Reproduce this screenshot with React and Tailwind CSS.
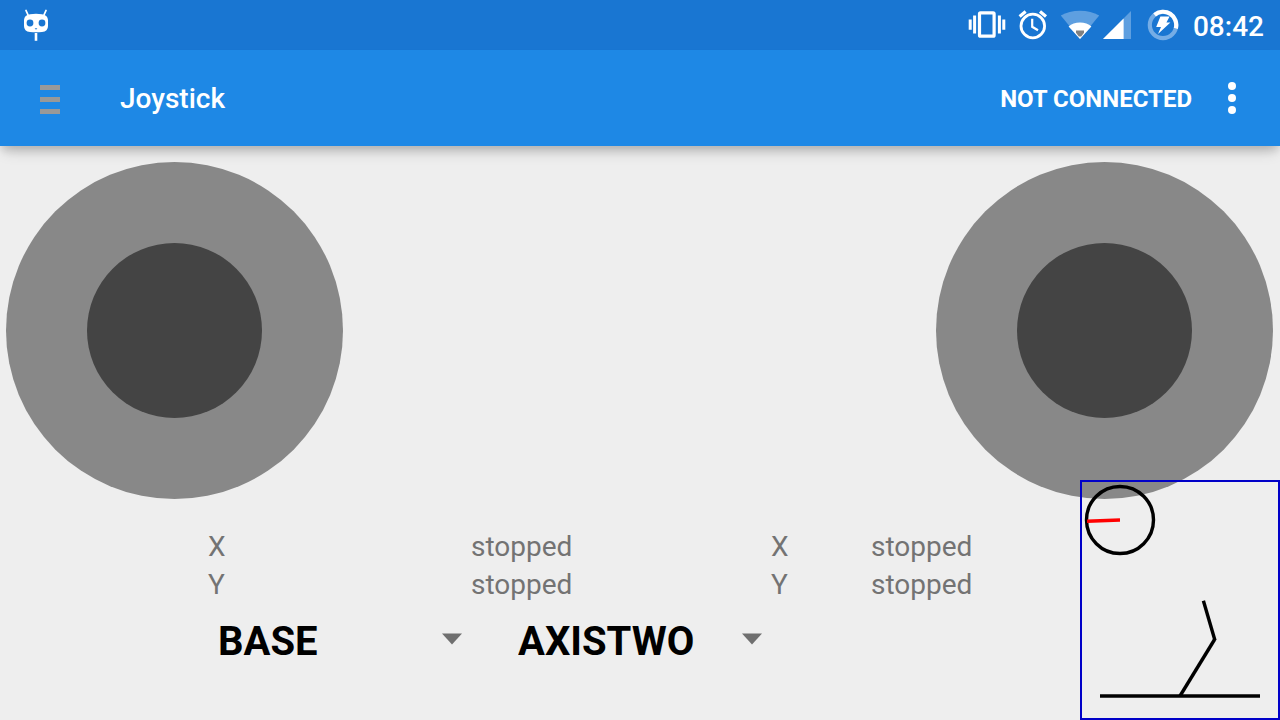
import { useState } from "react";

function NotificationIcon() {
  return (
    <svg viewBox="0 0 28 34" className="h-[34px] w-7" aria-hidden="true">
      <path d="M4 2.5 6.5 8M24 2.5 21.5 8" stroke="#fff" strokeWidth="1.8" strokeLinecap="round" />
      <path d="M8 6.2Q14 5.2 20 6.2Q25.6 7 26 12V18Q26 23.6 20 24Q14 24.6 8 24Q2 23.6 2 18V12Q2.4 7 8 6.2Z" fill="#fff" />
      <circle cx="8" cy="15" r="3.4" fill="#1976d2" />
      <circle cx="20" cy="15" r="3.4" fill="#1976d2" />
      <path d="M12.6 20.2h2.8L14 21.8Z" fill="#1976d2" />
      <path d="M14 25v7.8" stroke="#fff" strokeWidth="2.6" />
    </svg>
  );
}

function VibrateIcon() {
  return (
    <svg viewBox="0 0 38 34" className="h-[34px] w-[38px]" aria-hidden="true">
      <rect x="11.5" y="4.8" width="14.6" height="23.4" rx="1" fill="none" stroke="#fff" strokeWidth="3.2" />
      <path d="M6.6 7.5v18M31.4 7.5v18" stroke="#fff" strokeWidth="3" />
      <path d="M2.2 11.5v10.2M35.8 11.5v10.2" stroke="#fff" strokeWidth="3" />
    </svg>
  );
}

function AlarmIcon() {
  return (
    <svg viewBox="0 0 30 34" className="h-[34px] w-[30px]" aria-hidden="true">
      <g fill="none" stroke="#fff">
        <circle cx="14.8" cy="18" r="11.8" strokeWidth="2.8" />
        <path d="M1.6 8.4 7.6 3.4M22 3.4 28 8.4" strokeWidth="3.2" />
        <path d="M14.2 10.8V18.8L20 22.2" strokeWidth="2.2" />
      </g>
    </svg>
  );
}

function WifiIcon() {
  return (
    <svg viewBox="0 0 40 34" className="h-[34px] w-10" aria-hidden="true">
      <path d="M20 31 .8 7.6Q9 2.8 20 2.8T39.2 7.6Z" fill="#5e9fe0" />
      <path d="M20 31 8.6 18.6Q13 14.4 20 14.4T31.4 18.6Z" fill="#fff" />
      <path d="M16 22.4h8v2.4L21.2 28.4h-2.4L16 24.8Z" fill="#808080" />
    </svg>
  );
}

function SignalIcon() {
  return (
    <svg viewBox="0 0 30 34" className="h-[34px] w-[30px]" aria-hidden="true">
      <path d="M29 3v28H1Z" fill="#5e9fe0" />
      <path d="M21.6 10.4V31H1Z" fill="#fff" />
    </svg>
  );
}

function BatteryIcon() {
  return (
    <svg viewBox="0 0 32 34" className="h-[34px] w-8" aria-hidden="true">
      <circle cx="16" cy="17" r="13.2" fill="none" stroke="#75ade6" strokeWidth="4.2" />
      <path d="M7.6 6.8A13.2 13.2 0 0 1 28.8 20.4" fill="none" stroke="#fff" strokeWidth="4.2" />
      <path d="M13.4 8.6H22.6L19.4 14.4H23.4L11 26L14 19H9.2Z" fill="#fff" />
    </svg>
  );
}

function Joystick({ label }) {
  return (
    <div className="flex size-[337px] items-center justify-center rounded-full bg-[#888888]">
      <button type="button" aria-label={label} className="size-[175px] rounded-full bg-[#444444]" />
    </div>
  );
}

function AxisSelect({ label, value, onChange }) {
  return (
    <div className="grid w-[300px] items-center">
      <select
        aria-label={label}
        value={value}
        onChange={(e) => onChange(e.target.value)}
        className="col-start-1 row-start-1 h-12 appearance-none bg-transparent pl-[18px] text-[40px] leading-[48px] font-bold text-black"
      >
        <option>BASE</option>
        <option>AXISTWO</option>
      </select>
      <svg
        viewBox="0 0 20 12"
        className="pointer-events-none col-start-1 row-start-1 mr-[38px] mb-1.5 h-3 w-5 justify-self-end"
        aria-hidden="true"
      >
        <path d="M0 .5h20L10 11.5Z" fill="#6f6f6f" />
      </svg>
    </div>
  );
}

function ArmView() {
  return (
    <svg
      viewBox="0 0 200 240"
      className="absolute right-0 bottom-0 h-[240px] w-[200px]"
      role="img"
      aria-label="Arm position"
    >
      <rect x="1" y="1" width="198" height="238" fill="none" stroke="#0000c8" strokeWidth="2" />
      <circle cx="40" cy="40" r="33.5" fill="none" stroke="#000" strokeWidth="3.4" />
      <path d="M40 40 7 41.2" stroke="#f00" strokeWidth="3.4" />
      <g fill="none" stroke="#000" strokeWidth="3.4">
        <path d="M20 216H180" />
        <path d="M100 216 134.6 159.5" />
        <path d="M135 160.5 123.4 120.8" />
      </g>
    </svg>
  );
}

export default function App() {
  const [left, setLeft] = useState("BASE");
  const [right, setRight] = useState("AXISTWO");
  return (
    <div className="relative flex min-h-screen flex-col bg-[#eeeeee] font-[Roboto,sans-serif]">
      <div className="flex h-[50px] items-center justify-between bg-[#1976d2] pr-4 pl-[22px] text-white">
        <NotificationIcon />
        <div className="flex items-center gap-3">
          <VibrateIcon />
          <AlarmIcon />
          <div className="flex items-center gap-0.5">
            <WifiIcon />
            <SignalIcon />
          </div>
          <div className="flex items-center gap-3.5 pl-[3px]">
            <BatteryIcon />
            <span className="pt-[3px] text-[28px] leading-9 font-medium">08:42</span>
          </div>
        </div>
      </div>

      <header className="z-10 flex h-24 items-center bg-[#1e88e5] pt-0.5 pr-11 pl-10 text-white shadow-[0_6px_8px_-2px_rgba(0,0,0,0.14),0_9px_14px_-4px_rgba(0,0,0,0.16)]">
        <button type="button" aria-label="Open menu" className="flex w-5 flex-col gap-[7px]">
          <span className="h-[5px] bg-[#999999]" />
          <span className="h-[5px] bg-[#999999]" />
          <span className="h-[5px] bg-[#999999]" />
        </button>
        <h1 className="ml-[60px] text-[28px] leading-9 font-medium">Joystick</h1>
        <button type="button" className="ml-auto text-2xl font-bold">
          NOT CONNECTED
        </button>
        <button type="button" aria-label="More options" className="ml-9 flex flex-col gap-1 pb-0.5">
          <span className="size-2 rounded-full bg-white" />
          <span className="size-2 rounded-full bg-white" />
          <span className="size-2 rounded-full bg-white" />
        </button>
      </header>

      <main className="flex flex-1 flex-col pt-4">
        <div className="flex justify-between pr-[7px] pl-1.5">
          <Joystick label="Left joystick" />
          <Joystick label="Right joystick" />
        </div>

        <table className="mt-[29px] ml-[208px] w-[800px] table-fixed text-left text-[28px] leading-[38px] text-[#737373]">
          <colgroup>
            <col className="w-[263px]" />
            <col className="w-[300px]" />
            <col className="w-[100px]" />
            <col />
          </colgroup>
          <tbody>
            {["X", "Y"].map((axis) => (
              <tr key={axis}>
                <th scope="row" className="p-0 font-normal">{axis}</th>
                <td className="p-0">stopped</td>
                <th scope="row" className="p-0 font-normal">{axis}</th>
                <td className="p-0">stopped</td>
              </tr>
            ))}
          </tbody>
        </table>

        <div className="mt-3.5 flex pl-[200px]">
          <AxisSelect label="Left joystick axis" value={left} onChange={setLeft} />
          <AxisSelect label="Right joystick axis" value={right} onChange={setRight} />
        </div>
      </main>

      <ArmView />
    </div>
  );
}
